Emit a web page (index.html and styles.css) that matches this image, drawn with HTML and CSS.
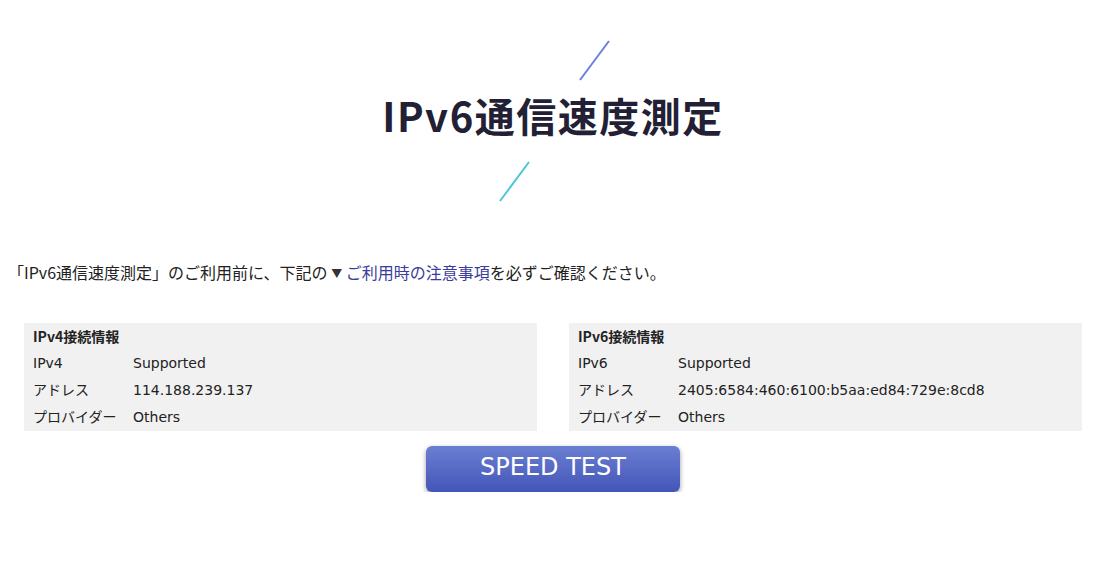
FILE: index.html
```html
<!DOCTYPE html>
<html lang="ja">
<head>
<meta charset="utf-8">
<title>IPv6通信速度測定</title>
<link rel="stylesheet" href="styles.css">
</head>
<body>
<header class="hero">
  <div class="deco deco-top">
    <svg width="31" height="41" viewBox="0 0 31 41"><line x1="1" y1="40" x2="30" y2="1" stroke="#6b80dc" stroke-width="2"/></svg>
  </div>
  <h1 class="title">IPv6通信速度測定</h1>
  <div class="deco deco-bottom">
    <svg width="31" height="41" viewBox="0 0 31 41"><line x1="1" y1="40" x2="30" y2="1" stroke="#4cc6d9" stroke-width="2"/></svg>
  </div>
</header>

<p class="intro">「IPv6通信速度測定」のご利用前に、下記の <span class="tri">▼</span> <a class="link" href="#">ご利用時の注意事項</a>を必ずご確認ください。</p>

<section class="panels">
  <div class="panel">
    <div class="panel-title">IPv4接続情報</div>
    <div class="row"><span class="label">IPv4</span><span class="value">Supported</span></div>
    <div class="row"><span class="label">アドレス</span><span class="value">114.188.239.137</span></div>
    <div class="row"><span class="label">プロバイダー</span><span class="value">Others</span></div>
  </div>
  <div class="panel">
    <div class="panel-title">IPv6接続情報</div>
    <div class="row"><span class="label">IPv6</span><span class="value">Supported</span></div>
    <div class="row"><span class="label">アドレス</span><span class="value">2405:6584:460:6100:b5aa:ed84:729e:8cd8</span></div>
    <div class="row"><span class="label">プロバイダー</span><span class="value">Others</span></div>
  </div>
</section>

<div class="actions">
  <button class="speed-btn" type="button">SPEED TEST</button>
</div>
</body>
</html>
```

FILE: styles.css
```css
* { box-sizing: border-box; }
html, body { margin: 0; padding: 0; background: #fff; }
body {
  font-family: "DejaVu Sans", "Noto Sans CJK JP", sans-serif;
  color: #222;
  width: 1097px;
}
.hero {
  width: 1058px;
  margin-left: 24px;
  padding-top: 40px;
}
.deco { display: flex; justify-content: center; height: 41px; }
.deco svg { display: block; }
.deco-top { padding-left: 83px; }
.deco-bottom { padding-right: 77px; }
.title {
  margin: 11px 0 23px;
  text-align: center;
  font-family: "Noto Sans CJK JP", sans-serif;
  font-weight: 700;
  font-size: 40px;
  line-height: 46px;
  color: #231f35;
  letter-spacing: 1.5px;
}
.intro {
  margin: 58px 0 0 8px;
  font-family: "Noto Sans CJK JP", sans-serif;
  font-size: 16px;
  line-height: 24px;
  color: #222;
}
.tri { font-size: 11px; color: #333; vertical-align: 1px; }
.link { color: #3a3c9c; text-decoration: none; }
.panels {
  display: flex;
  gap: 32px;
  margin: 38px 0 0 24px;
  width: 1058px;
}
.panel {
  flex: 1;
  background: #f1f1f1;
  padding: 0 9px;
  font-size: 14px;
  line-height: 27px;
}
.panel-title {
  font-family: "Noto Sans CJK JP", sans-serif;
  font-weight: 700;
  font-size: 14px;
  line-height: 27px;
}
.row { display: flex; }
.label {
  width: 100px;
  font-family: "DejaVu Sans", "Noto Sans CJK JP", sans-serif;
  font-size: 14px;
}
.value { font-size: 14px; }
.actions {
  display: flex;
  justify-content: center;
  width: 1058px;
  margin: 15px 0 0 24px;
}
.speed-btn {
  width: 254px;
  height: 46px;
  border: none;
  border-radius: 6px;
  background: linear-gradient(#6b7fd2, #4355b8);
  box-shadow: 0 2px 5px rgba(0,0,0,0.4);
  color: #fff;
  font-family: "DejaVu Sans", sans-serif;
  font-size: 24px;
  padding: 0 0 4px;
  cursor: pointer;
}
```
